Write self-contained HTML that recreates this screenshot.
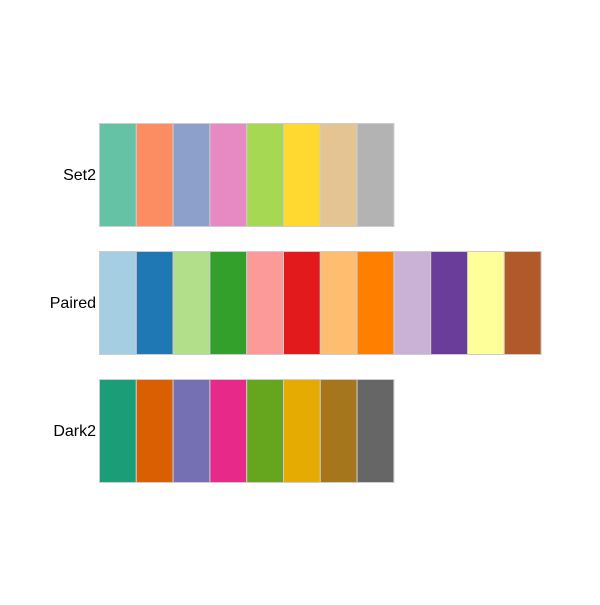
<!DOCTYPE html>
<html><head><style>body{margin:0;background:#fff}</style></head><body>
<svg width="600" height="600" xmlns="http://www.w3.org/2000/svg" font-family="Liberation Sans, sans-serif" font-size="16">
<g stroke="#cccccc" stroke-width="1">
<rect x="99.5" y="123.5" width="36.8" height="103" fill="#66c2a5"/>
<rect x="136.3" y="123.5" width="36.8" height="103" fill="#fc8d62"/>
<rect x="173.1" y="123.5" width="36.8" height="103" fill="#8da0cb"/>
<rect x="209.9" y="123.5" width="36.8" height="103" fill="#e78ac3"/>
<rect x="246.7" y="123.5" width="36.8" height="103" fill="#a6d854"/>
<rect x="283.5" y="123.5" width="36.8" height="103" fill="#ffd92f"/>
<rect x="320.3" y="123.5" width="36.8" height="103" fill="#e5c494"/>
<rect x="357.1" y="123.5" width="36.8" height="103" fill="#b3b3b3"/>

<rect x="99.5" y="251.5" width="36.8" height="103" fill="#a6cee3"/>
<rect x="136.3" y="251.5" width="36.8" height="103" fill="#1f78b4"/>
<rect x="173.1" y="251.5" width="36.8" height="103" fill="#b2df8a"/>
<rect x="209.9" y="251.5" width="36.8" height="103" fill="#33a02c"/>
<rect x="246.7" y="251.5" width="36.8" height="103" fill="#fb9a99"/>
<rect x="283.5" y="251.5" width="36.8" height="103" fill="#e31a1c"/>
<rect x="320.3" y="251.5" width="36.8" height="103" fill="#fdbf6f"/>
<rect x="357.1" y="251.5" width="36.8" height="103" fill="#ff7f00"/>
<rect x="393.9" y="251.5" width="36.8" height="103" fill="#cab2d6"/>
<rect x="430.7" y="251.5" width="36.8" height="103" fill="#6a3d9a"/>
<rect x="467.5" y="251.5" width="36.8" height="103" fill="#ffff99"/>
<rect x="504.3" y="251.5" width="36.8" height="103" fill="#b15928"/>

<rect x="99.5" y="379.5" width="36.8" height="103" fill="#1b9e77"/>
<rect x="136.3" y="379.5" width="36.8" height="103" fill="#d95f02"/>
<rect x="173.1" y="379.5" width="36.8" height="103" fill="#7570b3"/>
<rect x="209.9" y="379.5" width="36.8" height="103" fill="#e7298a"/>
<rect x="246.7" y="379.5" width="36.8" height="103" fill="#66a61e"/>
<rect x="283.5" y="379.5" width="36.8" height="103" fill="#e6ab02"/>
<rect x="320.3" y="379.5" width="36.8" height="103" fill="#a6761d"/>
<rect x="357.1" y="379.5" width="36.8" height="103" fill="#666666"/>
</g>
<g text-anchor="end" fill="#000">
<text x="96" y="180">Set2</text>
<text x="96" y="308">Paired</text>
<text x="96" y="436">Dark2</text>
</g>
</svg>
</body></html>
